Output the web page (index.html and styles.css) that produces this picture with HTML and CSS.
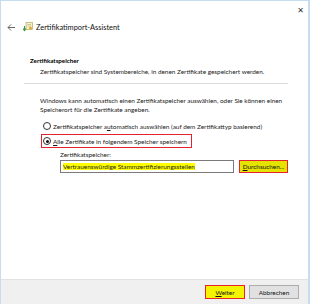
FILE: index.html
```html
<!DOCTYPE html>
<html lang="de">
<head>
  <meta charset="UTF-8">
  <title>Zertifikatimport-Assistent</title>
  <link rel="stylesheet" href="styles.css">
</head>
<body>
  <div class="wizard">
    <div class="titlebar">
      <span class="close">&#x2715;</span>
    </div>
    <div class="wizard-header">
      <svg class="back" width="8" height="7" viewBox="0 0 8 7"><path d="M4 0.5 L1 3.5 L4 6.5 M1 3.5 H8" fill="none" stroke="#555" stroke-width="0.9"/></svg>
      <svg class="cert-icon" width="10" height="10" viewBox="0 0 10 10">
        <rect x="3" y="0.5" width="6.5" height="7" fill="#f6f0c8" stroke="#a89a50" stroke-width="0.6"/>
        <path d="M4.5 2.5 H8 M4.5 4 H8" stroke="#b0a060" stroke-width="0.5"/>
        <circle cx="7.5" cy="6" r="1.3" fill="#e0a020"/>
        <path d="M1.5 4 V8 M0 6.5 L1.5 8.5 L3 6.5" fill="none" stroke="#3a9a3a" stroke-width="1.1"/>
      </svg>
      <span class="wizard-title">Zertifikatimport-Assistent</span>
    </div>

    <div class="wizard-body">
      <div class="section-title">Zertifikatspeicher</div>
      <p class="section-desc">Zertifikatspeicher sind Systembereiche, in denen Zertifikate gespeichert werden.</p>
      <div class="separator"></div>

      <p class="info">Windows kann automatisch einen Zertifikatspeicher auswählen, oder Sie können einen Speicherort für die Zertifikate angeben.</p>

      <label class="radio-row first">
        <span class="radio"></span>
        <span>Zertifikatspeicher a<u>u</u>tomatisch auswählen (auf dem Zertifikattyp basierend)</span>
      </label>
      <label class="radio-row marked">
        <span class="radio checked"></span>
        <span><u>A</u>lle Zertifikate in folgendem Speicher speichern</span>
      </label>

      <div class="store">
        <div class="store-label">Zertifikatspeicher:</div>
        <div class="store-row">
          <div class="store-input"><span class="hl">Vertrauenswürdige Stammzertifizierungsstellen</span></div>
          <button class="btn btn-browse"><u>D</u>urchsuchen...</button>
        </div>
      </div>
    </div>

    <div class="wizard-footer">
      <button class="btn btn-next"><u>W</u>eiter</button>
      <button class="btn btn-cancel">Abbrechen</button>
    </div>
  </div>
</body>
</html>
```

FILE: styles.css
```css
body {
  margin: 0;
  padding: 0;
  background: #fff;
  font-family: "Lato", "Liberation Sans", sans-serif;
  font-size: 6.4px;
  color: #1a1a1a;
}
.wizard {
  width: 307px;
  height: 303px;
  border: 1px solid #c7dcf1;
  border-right-width: 2px;
  display: flex;
  flex-direction: column;
  background: #fff;
}
.titlebar {
  height: 18px;
  display: flex;
  justify-content: flex-end;
  align-items: center;
  padding-right: 4px;
}
.close {
  font-size: 8px;
  color: #333;
  font-family: "DejaVu Sans", sans-serif;
}
.wizard-header {
  display: flex;
  align-items: center;
  height: 16px;
  padding-left: 6px;
}
.back {
  margin-right: 8px;
}
.cert-icon {
  margin-right: 3px;
}
.wizard-title {
  font-size: 7.4px;
  color: #111;
}
.wizard-body {
  flex: 1;
  padding: 22px 20px 0 29px;
}
.section-title {
  font-weight: bold;
  font-size: 6.2px;
  color: #000;
}
.section-desc {
  margin: 4px 0 0 10px;
}
.separator {
  height: 1px;
  background: #dcdcdc;
  margin: 8px 0 0 -6px;
}
.info {
  margin: 12px 0 0 10px;
  line-height: 9px;
  width: 250px;
}
.radio-row {
  display: flex;
  align-items: center;
  gap: 2px;
  margin-left: 13px;
  height: 10px;
}
.radio-row.first {
  margin-top: 7px;
}
.radio-row.marked {
  margin-top: 3px;
  margin-left: 11px;
  width: max-content;
  height: 12px;
  border: 1.5px solid #e5232f;
  padding: 0 4px 0 1px;
}
.radio {
  width: 6px;
  height: 6px;
  border: 1px solid #333;
  border-radius: 50%;
  background: #fff;
  position: relative;
}
.radio.checked::after {
  content: "";
  position: absolute;
  left: 1.5px;
  top: 1.5px;
  width: 3px;
  height: 3px;
  border-radius: 50%;
  background: #111;
}
.store {
  margin: 3px 0 0 30px;
}
.store-row {
  display: flex;
  align-items: center;
  gap: 5px;
  margin-top: 2px;
}
.store-input {
  width: 170px;
  height: 11px;
  border: 1px solid #7a7a7a;
  padding-left: 2px;
  display: flex;
  align-items: center;
}
.hl {
  background: #ffff00;
  color: #222;
}
.btn {
  font-family: inherit;
  font-size: 6.4px;
  color: #111;
  background: #e1e1e1;
  border: 1px solid #adadad;
  height: 14px;
  padding: 0;
}
.btn-browse {
  width: 49px;
  height: 13px;
  background: #e4e400;
  border: 1.5px solid #e5232f;
}
.wizard-footer {
  height: 24px;
  background: #f0f0f0;
  border-top: 1px solid #e2e2e2;
  display: flex;
  justify-content: flex-end;
  align-items: center;
  gap: 4px;
  padding-right: 9px;
}
.btn-next {
  width: 40px;
  background: #f4f400;
  border: 1.5px solid #e5232f;
}
.btn-cancel {
  width: 50px;
}
```
